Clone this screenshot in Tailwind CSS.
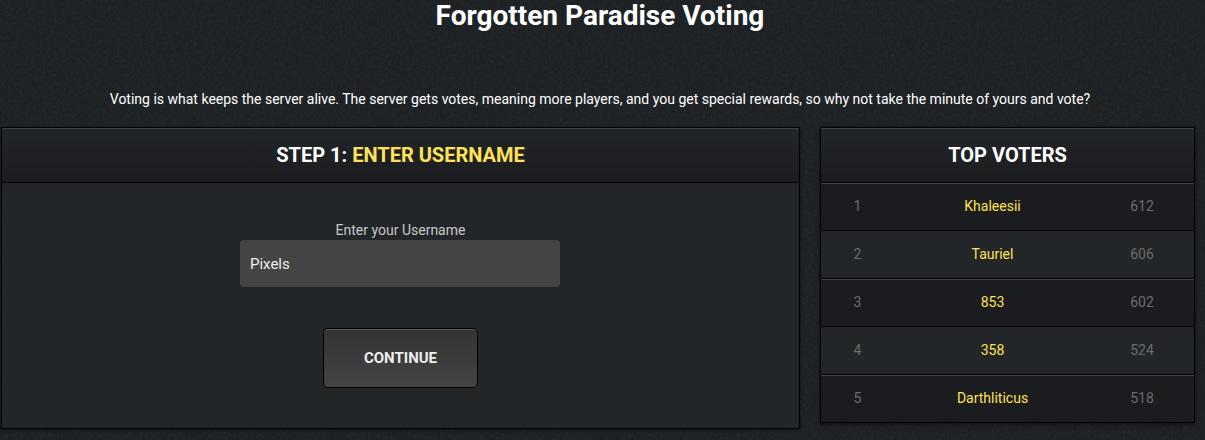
<!DOCTYPE html>
<html lang="en">
<head>
<meta charset="utf-8">
<title>Forgotten Paradise Voting</title>
<script src="https://cdn.jsdelivr.net/npm/@tailwindcss/browser@4"></script>
</head>
<body class="relative isolate h-[440px] w-[1205px] overflow-hidden bg-[#1d2124] font-['Roboto',sans-serif] text-sm text-white">
<svg class="absolute inset-0 -z-10" width="1205" height="440" aria-hidden="true">
  <filter id="grain" x="0" y="0" width="100%" height="100%">
    <feTurbulence type="fractalNoise" baseFrequency="0.35" numOctaves="3" seed="4"/>
    <feColorMatrix values="0 0 0 0 .45  0 0 0 0 .5  0 0 0 0 .52  .35 0 0 0 -.12"/>
  </filter>
  <rect width="1205" height="440" filter="url(#grain)" opacity=".25"/>
</svg>
<h1 class="h-[32px] pr-[5px] text-center text-[28px] leading-[32px] font-bold">Forgotten Paradise Voting</h1>
<p class="mt-[57px] pr-[5px] text-center leading-5 whitespace-nowrap">Voting is what keeps the server alive. The server gets votes, meaning more players, and you get special rewards, so why not take the minute of yours and vote?</p>
<main class="mt-[18px] flex items-start gap-5 pl-px">
  <section class="h-[302px] w-[799px] border border-black bg-[#222628] shadow-[0_1px_3px_rgba(0,0,0,0.5)]">
    <h2 class="h-[55px] border-b border-black bg-linear-to-b from-[#222628] to-[#1b1c1f] text-center text-xl leading-[55px] font-bold shadow-[inset_0_1px_0_#3d4042]">STEP 1: <span class="text-[#ffe15b]">ENTER USERNAME</span></h2>
    <form class="flex flex-col items-center pt-[37px]">
      <label class="h-5 leading-5 text-[#c8c8c8]" for="user">Enter your Username</label>
      <input id="user" class="mr-px h-[47px] w-80 rounded bg-[#444] px-2.5 text-[15px] text-[#eee] outline-none" value="Pixels">
      <button type="button" class="mt-[41px] h-[60px] w-[155px] rounded-[5px] border border-black bg-linear-to-b from-[#333] to-[#444] pt-0.5 text-[15px] font-bold text-[#eee] shadow-[inset_0_1px_0_#5c5c5c]">CONTINUE</button>
    </form>
  </section>
  <section class="w-[375px] border border-black bg-[#1b1c1f] shadow-[0_1px_4px_rgba(0,0,0,0.6)]">
    <h2 class="h-[55px] border-b border-black bg-linear-to-b from-[#222628] to-[#1b1c1f] text-center text-xl leading-[55px] font-bold shadow-[inset_0_1px_0_#3d4042]">TOP VOTERS</h2>
    <ol class="text-center leading-[47px] text-[#6c6c6c]">
      <li class="grid h-12 grid-cols-[73px_197px_102px] border-b border-black bg-[#1b1c1f] shadow-[inset_0_1px_0_#444547]"><span>1</span><span class="text-[#ffe15b]">Khaleesii</span><span>612</span></li>
      <li class="grid h-12 grid-cols-[73px_197px_102px] border-b border-black bg-[#222628]"><span>2</span><span class="text-[#ffe15b]">Tauriel</span><span>606</span></li>
      <li class="grid h-12 grid-cols-[73px_197px_102px] border-b border-black bg-[#1b1c1f] shadow-[inset_0_1px_0_#444547]"><span>3</span><span class="text-[#ffe15b]">853</span><span>602</span></li>
      <li class="grid h-12 grid-cols-[73px_197px_102px] border-b border-black bg-[#222628]"><span>4</span><span class="text-[#ffe15b]">358</span><span>524</span></li>
      <li class="grid h-[47px] grid-cols-[73px_197px_102px] bg-[#1b1c1f] shadow-[inset_0_1px_0_#444547]"><span>5</span><span class="text-[#ffe15b]">Darthliticus</span><span>518</span></li>
    </ol>
  </section>
</main>
</body>
</html>
